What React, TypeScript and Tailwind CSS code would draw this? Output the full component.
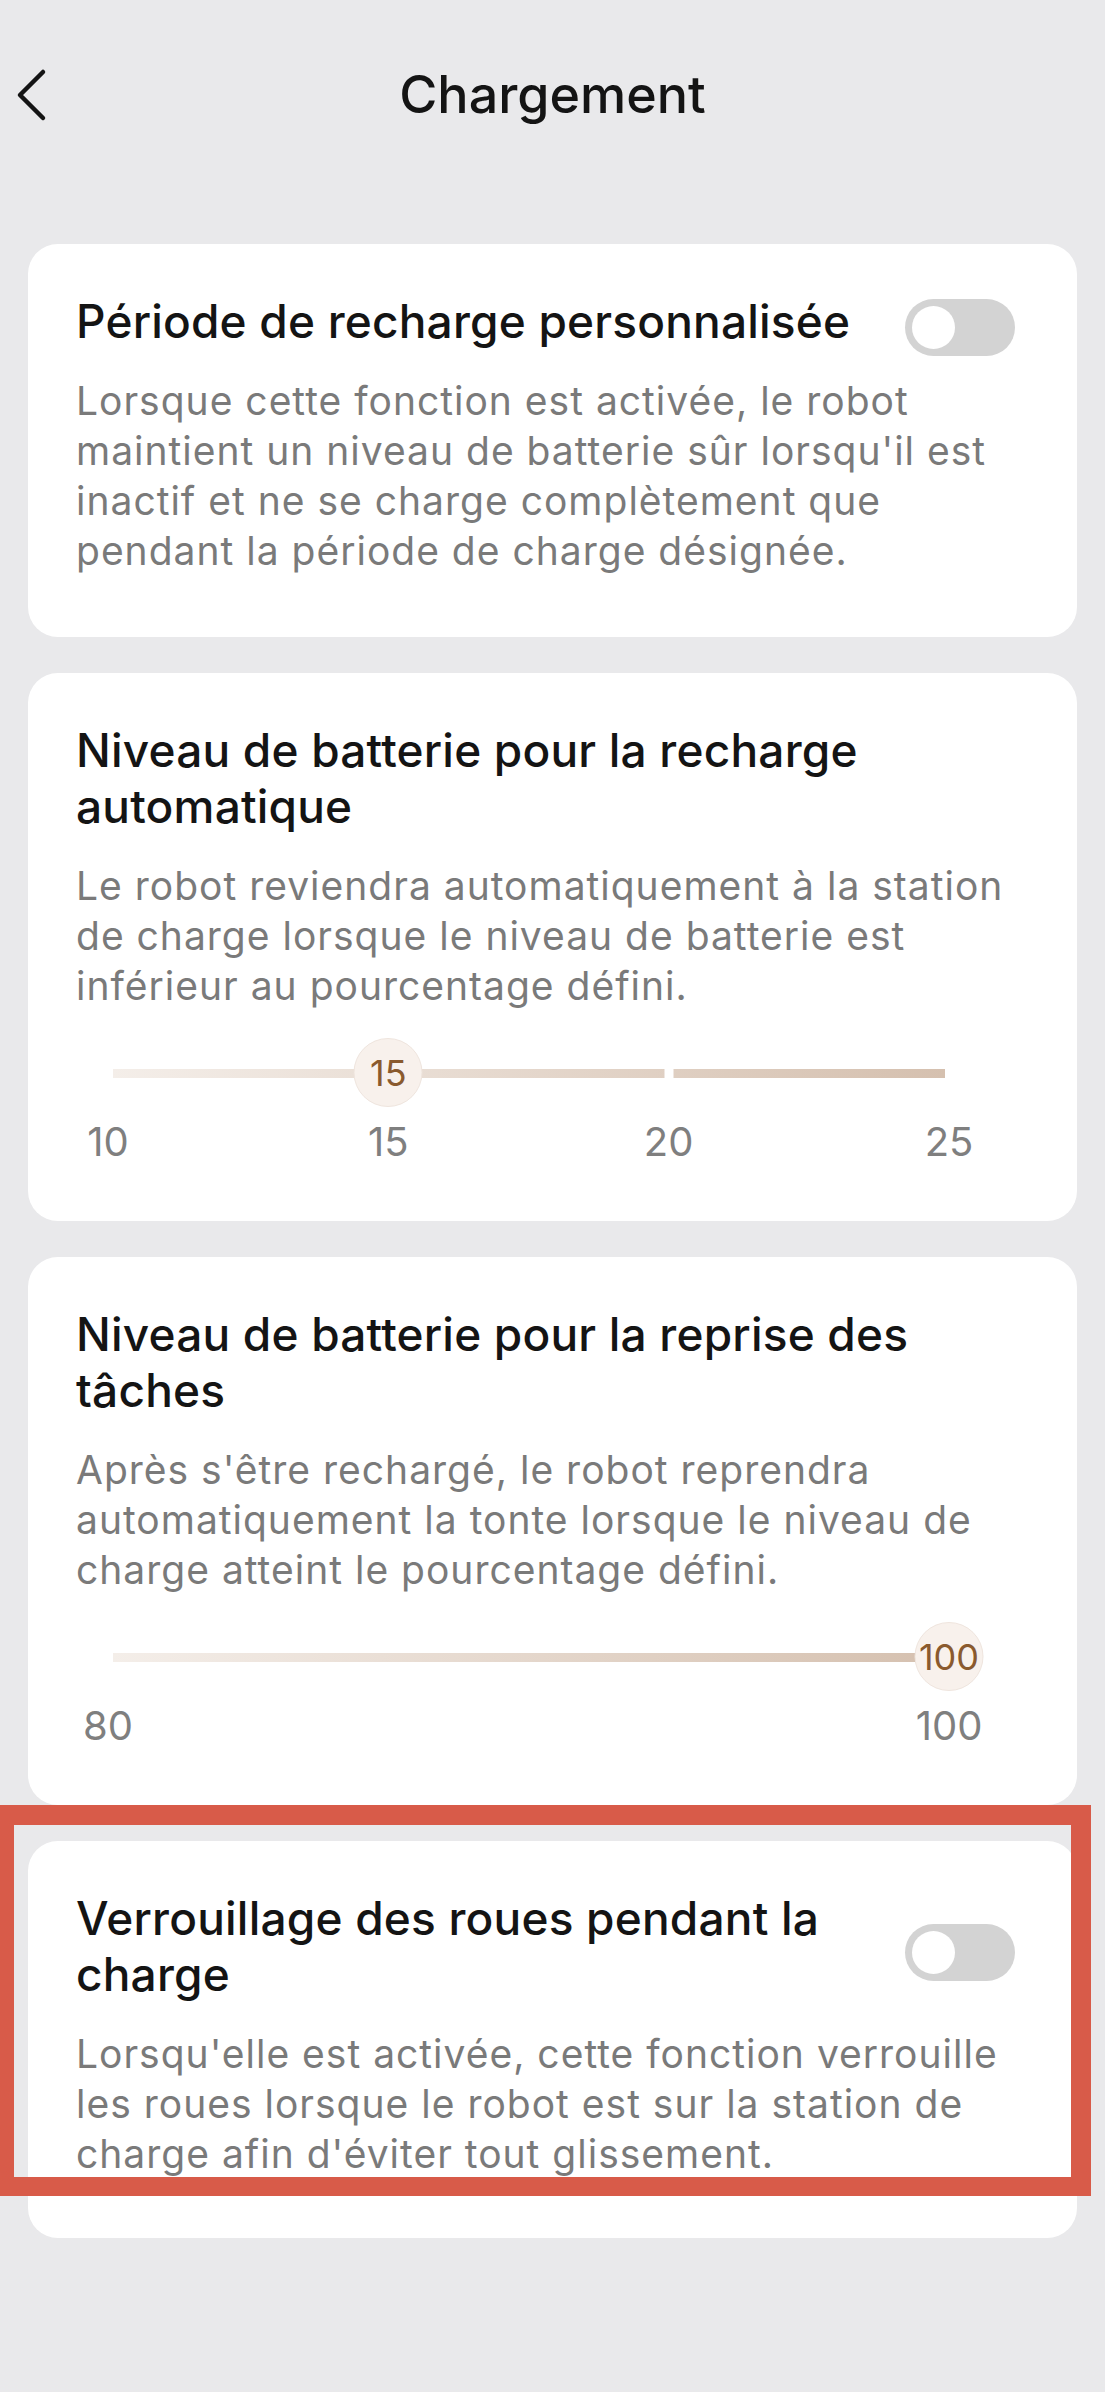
import React from "react";

const Toggle = ({ className }: { className: string }) => (
  <div className={`flex h-[57px] w-[110px] shrink-0 items-center rounded-full bg-[#d3d3d3] p-[7px] ${className}`}>
    <div className="h-[43px] w-[43px] rounded-full bg-white" />
  </div>
);

const Lines = ({ lines, className }: { lines: string[]; className: string }) => (
  <div className={className}>
    {lines.map((l) => (
      <div key={l} className="whitespace-nowrap">
        {l}
      </div>
    ))}
  </div>
);

const Title = ({ lines }: { lines: string[] }) => (
  <Lines lines={lines} className="text-[46px] leading-[56px] font-medium tracking-[0.2px] text-[#141414]" />
);

const Desc = ({ lines }: { lines: string[] }) => (
  <Lines lines={lines} className="mt-[27px] text-[39px] leading-[50px] tracking-[1px] text-[#7a7a7a]" />
);

type SliderProps = {
  min: number;
  max: number;
  value: number;
  ticks: number[];
  gapAt?: number;
};

const Slider = ({ min, max, value, ticks, gapAt }: SliderProps) => {
  const pct = (v: number) => ((v - min) / (max - min)) * 100;
  return (
    <div className="ml-[32px] mt-[27px] w-[841px]">
      <div className="relative h-[70px]">
        <div className="absolute left-[5px] right-[4px] top-[31px] h-[9px] bg-gradient-to-r from-[#f4eee9] to-[#d5c0af]" />
        {gapAt !== undefined && (
          <div
            className="absolute top-[28px] h-[15px] w-[9px] -translate-x-1/2 bg-white"
            style={{ left: `${pct(gapAt)}%` }}
          />
        )}
        <div
          className="absolute top-0 flex h-[69px] w-[69px] -translate-x-1/2 items-center justify-center rounded-full border border-[#efe5de] bg-[#f8f1ec] text-[36px] text-[#8a5a2e]"
          style={{ left: `${pct(value)}%` }}
        >
          {value}
        </div>
      </div>
      <div className="relative mt-[10px] h-[48px]">
        {ticks.map((t) => (
          <span
            key={t}
            className="absolute top-0 -translate-x-1/2 text-[40px] leading-[48px] text-[#7f7f7f]"
            style={{ left: `${pct(t)}%` }}
          >
            {t}
          </span>
        ))}
      </div>
    </div>
  );
};

export default function App() {
  return (
    <div className="relative min-h-[2392px] w-full bg-[#e9e9eb] font-[Inter,sans-serif]">
      <header className="grid h-[190px] grid-cols-[1fr_auto_1fr] items-center">
        <div className="pl-[14px]">
          <svg width="36" height="56" viewBox="0 0 36 56" fill="none">
            <path d="M29 5 L6 28 L29 51" stroke="#141414" strokeWidth="4.5" strokeLinecap="round" strokeLinejoin="round" />
          </svg>
        </div>
        <h1 className="text-[52px] font-medium text-[#141414]">Chargement</h1>
        <div />
      </header>

      <main className="flex flex-col gap-[36px] px-[28px] pt-[54px]">
        <section className="rounded-[30px] bg-white pb-[61px] pl-[48px] pr-[62px] pt-[49px]">
          <div className="flex items-start justify-between">
            <Title lines={["Période de recharge personnalisée"]} />
            <Toggle className="mt-[6px] -mb-[7px]" />
          </div>
          <Desc
            lines={[
              "Lorsque cette fonction est activée, le robot",
              "maintient un niveau de batterie sûr lorsqu'il est",
              "inactif et ne se charge complètement que",
              "pendant la période de charge désignée.",
            ]}
          />
        </section>

        <section className="rounded-[30px] bg-white pb-[55px] pl-[48px] pr-[62px] pt-[49px]">
          <Title lines={["Niveau de batterie pour la recharge", "automatique"]} />
          <Desc
            lines={[
              "Le robot reviendra automatiquement à la station",
              "de charge lorsque le niveau de batterie est",
              "inférieur au pourcentage défini.",
            ]}
          />
          <Slider min={10} max={25} value={15} ticks={[10, 15, 20, 25]} gapAt={20} />
        </section>

        <section className="rounded-[30px] bg-white pb-[55px] pl-[48px] pr-[62px] pt-[49px]">
          <Title lines={["Niveau de batterie pour la reprise des", "tâches"]} />
          <Desc
            lines={[
              "Après s'être rechargé, le robot reprendra",
              "automatiquement la tonte lorsque le niveau de",
              "charge atteint le pourcentage défini.",
            ]}
          />
          <Slider min={80} max={100} value={100} ticks={[80, 100]} />
        </section>

        <section className="rounded-[30px] bg-white pb-[59px] pl-[48px] pr-[62px] pt-[49px]">
          <div className="flex items-center justify-between">
            <Title lines={["Verrouillage des roues pendant la", "charge"]} />
            <Toggle className="mt-[12px]" />
          </div>
          <Desc
            lines={[
              "Lorsqu'elle est activée, cette fonction verrouille",
              "les roues lorsque le robot est sur la station de",
              "charge afin d'éviter tout glissement.",
            ]}
          />
        </section>
      </main>

      {/* annotation frame */}
      <div className="absolute left-0 top-[1805px] h-[391px] w-[1091px] border-[20px] border-b-[19px] border-l-[14px] border-[#d85b49]" />
    </div>
  );
}
